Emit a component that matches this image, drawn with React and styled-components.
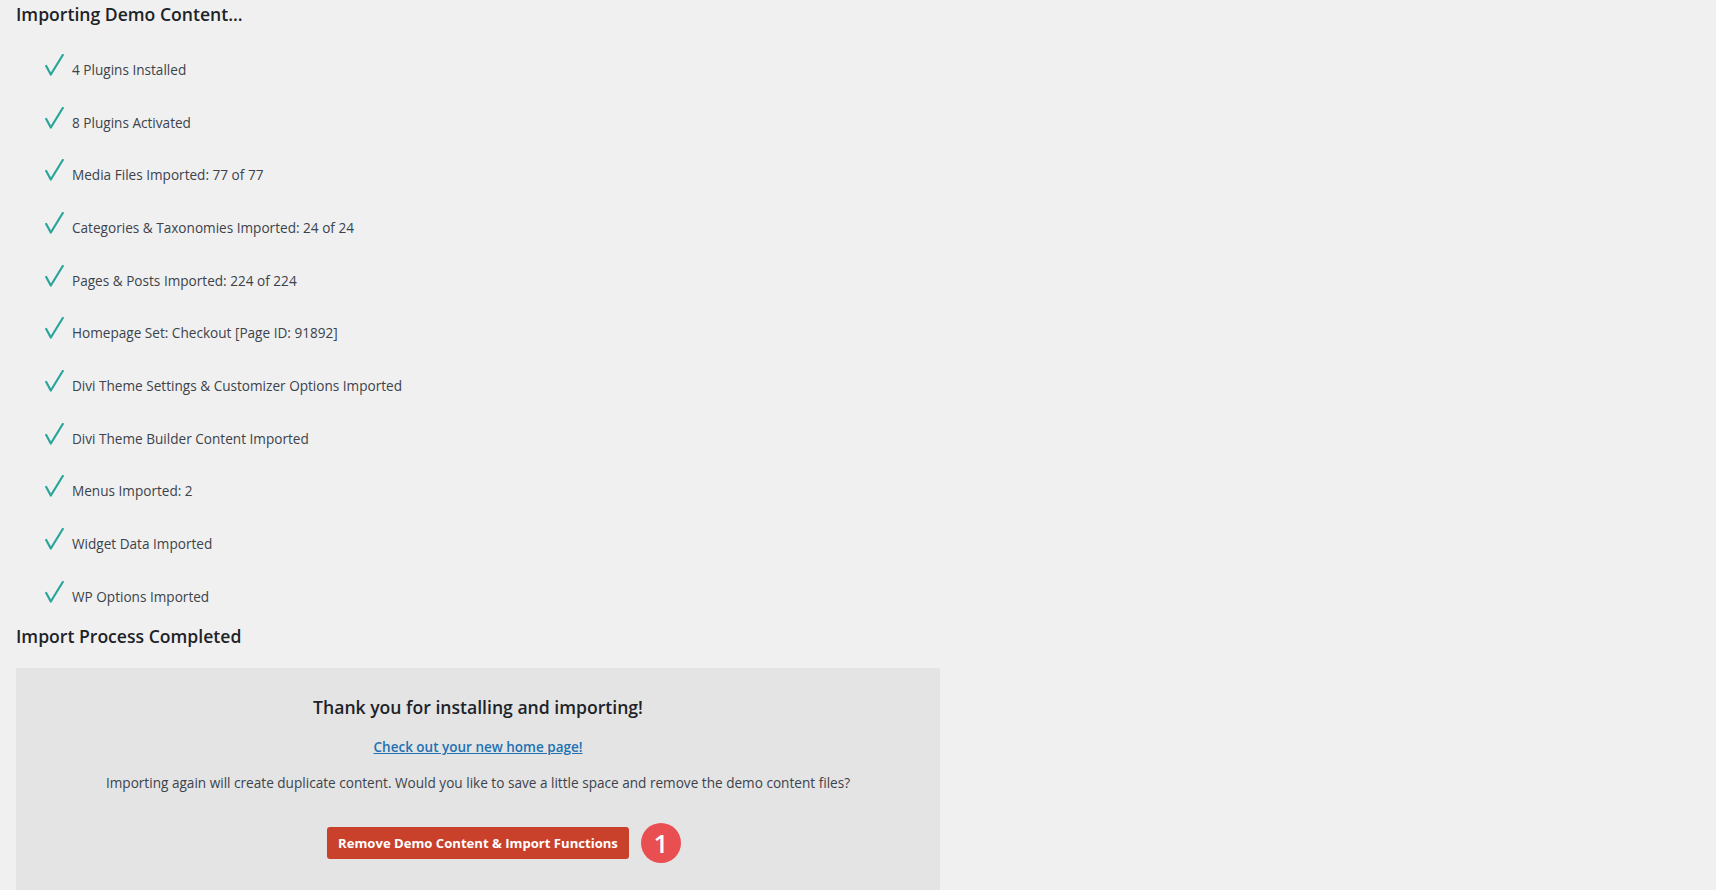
import React from "react";
import styled, { createGlobalStyle } from "styled-components";

const GlobalStyle = createGlobalStyle`
  html, body {
    margin: 0;
    padding: 0;
    background: #f0f0f1;
  }
  body {
    font-family: "Open Sans", "Noto Sans", sans-serif;
    color: #3c434a;
  }
`;

const steps = [
  "4 Plugins Installed",
  "8 Plugins Activated",
  "Media Files Imported: 77 of 77",
  "Categories & Taxonomies Imported: 24 of 24",
  "Pages & Posts Imported: 224 of 224",
  "Homepage Set: Checkout [Page ID: 91892]",
  "Divi Theme Settings & Customizer Options Imported",
  "Divi Theme Builder Content Imported",
  "Menus Imported: 2",
  "Widget Data Imported",
  "WP Options Imported",
];

function Check() {
  return (
    <CheckIcon width="19" height="22" viewBox="0 0 19 22">
      <path
        d="M1.2 12 L5.8 20.5 L17.8 1"
        fill="none"
        stroke="#2aa59a"
        strokeWidth="2.2"
        strokeLinecap="round"
        strokeLinejoin="round"
      />
    </CheckIcon>
  );
}

export default function App() {
  return (
    <Page>
      <GlobalStyle />
      <Title>Importing Demo Content...</Title>
      <StepList>
        {steps.map((s) => (
          <Step key={s}>
            <Check />
            <StepText>{s}</StepText>
          </Step>
        ))}
      </StepList>
      <Title>Import Process Completed</Title>
      <DoneBox>
        <Thanks>Thank you for installing and importing!</Thanks>
        <HomeLink href="#">Check out your new home page!</HomeLink>
        <Note>
          Importing again will create duplicate content. Would you like to save
          a little space and remove the demo content files?
        </Note>
        <ActionRow>
          <RemoveButton>Remove Demo Content &amp; Import Functions</RemoveButton>
          <Badge>1</Badge>
        </ActionRow>
      </DoneBox>
    </Page>
  );
}

const Page = styled.div`
  padding: 0 0 0 16px;
  width: 924px;
  height: 890px;
  overflow: hidden;
`;

const Title = styled.h2`
  margin: 0;
  font-size: 17.6px;
  line-height: 28px;
  font-weight: 600;
  color: #1d2327;
`;

const StepList = styled.ul`
  list-style: none;
  margin: 15.5px 0 -1.5px;
  padding: 0 0 0 29px;
`;

const Step = styled.li`
  display: flex;
  align-items: center;
  height: 52.7px;
`;

const CheckIcon = styled.svg`
  flex: none;
  margin-bottom: 10px;
`;

const StepText = styled.span`
  margin-left: 8px;
  font-size: 13.6px;
  line-height: 18px;
  color: #3c434a;
`;

const DoneBox = styled.div`
  margin-top: 18px;
  background: #e4e4e5;
  height: 260px;
  display: flex;
  flex-direction: column;
  align-items: center;
  padding-top: 26px;
  box-sizing: border-box;
`;

const Thanks = styled.h3`
  margin: 0;
  font-size: 17.6px;
  line-height: 26px;
  font-weight: 600;
  color: #1d2327;
`;

const HomeLink = styled.a`
  margin-top: 18.5px;
  font-size: 13.5px;
  line-height: 18px;
  font-weight: 600;
  color: #2271b1;
  text-decoration: underline;
`;

const Note = styled.p`
  margin: 18px 0 0;
  font-size: 13.6px;
  line-height: 18px;
  color: #3c434a;
`;

const ActionRow = styled.div`
  margin-top: 31px;
  display: flex;
  align-items: center;
  gap: 12px;
  margin-left: 52px;
`;

const RemoveButton = styled.button`
  font-family: "Open Sans", "Noto Sans", sans-serif;
  background: #c9402b;
  color: #fff;
  border: none;
  border-radius: 3px;
  height: 32px;
  padding: 0 11px;
  font-size: 13.1px;
  font-weight: 700;
  cursor: pointer;
`;

const Badge = styled.span`
  width: 40px;
  height: 40px;
  border-radius: 50%;
  background: #e94f50;
  color: #fff;
  display: flex;
  align-items: center;
  justify-content: center;
  font-size: 26px;
  font-weight: 600;
  font-family: "Open Sans", sans-serif;
`;
